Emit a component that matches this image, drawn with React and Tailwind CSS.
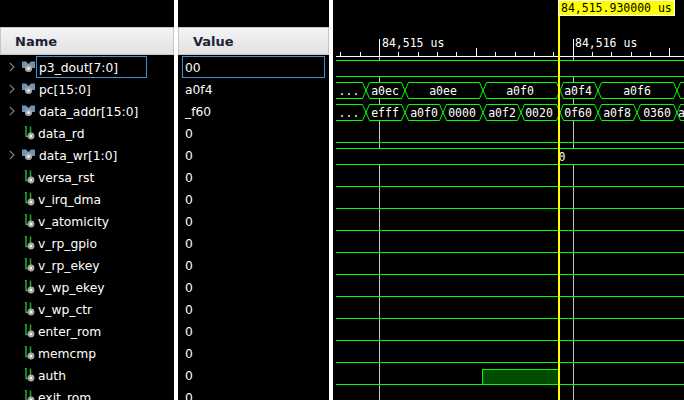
import React from "react";

const rows = [
  ["p3_dout[7:0]", "00", true],
  ["pc[15:0]", "a0f4", true],
  ["data_addr[15:0]", "_f60", true],
  ["data_rd", "0", false],
  ["data_wr[1:0]", "0", true],
  ["versa_rst", "0", false],
  ["v_irq_dma", "0", false],
  ["v_atomicity", "0", false],
  ["v_rp_gpio", "0", false],
  ["v_rp_ekey", "0", false],
  ["v_wp_ekey", "0", false],
  ["v_wp_ctr", "0", false],
  ["enter_rom", "0", false],
  ["memcmp", "0", false],
  ["auth", "0", false],
  ["exit_rom", "0", false],
];

const SANS = "font-['DejaVu_Sans',sans-serif]";

function Chevron() {
  return (
    <svg width="6" height="10" viewBox="0 0 6 10" className="shrink-0">
      <path d="M0.8 0.8 L5 5 L0.8 9.2" fill="none" stroke="#8a8a8a" strokeWidth="1.1" />
    </svg>
  );
}

function BusIcon() {
  return (
    <svg width="13" height="12" viewBox="0 0 13 12" className="shrink-0">
      <path d="M0 0.5 L4 0.5 L6.5 3 L9 0.5 L13 0.5 L13 7 L9.5 7 L6.5 4 L3.5 7 L0 7 Z" fill="#6f93b0" />
      <circle cx="6.5" cy="7.5" r="3.6" fill="#a8a8a8" />
      <circle cx="6.5" cy="7.5" r="1.3" fill="#ffffff" />
    </svg>
  );
}

function BitIcon() {
  return (
    <svg width="11" height="14" viewBox="0 0 11 14" className="shrink-0">
      <path d="M0.8 0.5 L2 0.5 L2 10.5 L4 10.5 M6.5 0.5 L6.5 7" fill="none" stroke="#22b02e" strokeWidth="1.5" />
      <circle cx="7" cy="10" r="3.4" fill="#a8a8a8" />
      <circle cx="7" cy="10" r="1.2" fill="#ffffff" />
    </svg>
  );
}

function Header({ label, className }) {
  return (
    <div
      className={`h-[28px] shrink-0 flex items-center pt-px bg-gradient-to-b from-[#f4f4f4] to-[#e2e2e2] border border-[#c6c6c6] text-[13px] font-bold text-[#1c2233] ${SANS} ${className}`}
    >
      {label}
    </div>
  );
}

function NameRow({ name, bus, selected }) {
  return (
    <div className="h-[22px] shrink-0 flex items-center relative">
      <div className="w-[22px] shrink-0 flex justify-start pl-[9px]">{bus && <Chevron />}</div>
      <div className={bus ? "w-[17px] shrink-0 flex" : "w-[16px] shrink-0 flex pl-[2px]"}>
        {bus ? <BusIcon /> : <BitIcon />}
      </div>
      <span className="text-[12.3px] pt-[2px] text-white whitespace-nowrap">{name}</span>
      {selected && (
        <div className="absolute left-[36px] top-0 w-[111px] h-[22px] border border-[#3d8fd0]" />
      )}
    </div>
  );
}

function ValueRow({ value, selected }) {
  return (
    <div className="h-[22px] shrink-0 flex items-center pl-[7px] relative">
      <span className="text-[12.3px] pt-[2px] text-white">{value}</span>
      {selected && (
        <div className="absolute left-[4px] top-0 w-[143px] h-[22px] border border-[#3d8fd0]" />
      )}
    </div>
  );
}

const GREEN = "#00ff00";
const MONO = "'DejaVu Sans Mono', monospace";

function Bus({ top, xs = [], labels = [] }) {
  const bot = top + 16;
  const mid = top + 8;
  const end = 684;
  const hw = 3.5;
  const pts = [336, ...xs, end];
  const d = [];
  pts.forEach((x, i) => {
    if (i === pts.length - 1) return;
    const a = i === 0 ? x : x + hw;
    const b = i === pts.length - 2 ? pts[i + 1] : pts[i + 1] - hw;
    d.push(`M${a} ${top + 0.5} L${b} ${top + 0.5} M${a} ${bot + 0.5} L${b} ${bot + 0.5}`);
  });
  xs.forEach((x) => {
    d.push(`M${x - hw} ${top + 0.5} L${x + hw} ${bot + 0.5} M${x - hw} ${bot + 0.5} L${x + hw} ${top + 0.5}`);
  });
  return (
    <g>
      <rect x="336" y={top} width="348" height="16" fill="#000" />
      <path d={d.join(" ")} fill="none" stroke={GREEN} strokeWidth="1" shapeRendering="auto" />
      {labels.map(([t, x, anchor], i) => (
        <text key={i} x={x} y={mid + 4.5} textAnchor={anchor || "middle"} fill="#fff" fontSize="11.5" fontFamily={MONO}>
          {t}
        </text>
      ))}
    </g>
  );
}

function Waveform() {
  const ticks = [];
  for (let i = -2; i < 18; i++) ticks.push(379.5 + i * 19.36);
  const bits = [142, 186, 208, 230, 252, 274, 296, 318, 340, 362, 384];
  return (
    <svg width="351" height="400" viewBox="333 0 351 400" className="block shrink-0" shapeRendering="crispEdges">
      <path d="M379.5 56 V400 M573.5 56 V400" stroke="#c4c4c4" strokeWidth="1" />
      <path d="M336 56.5 H684" stroke="#fff" strokeWidth="1" />
      {ticks.map((x, i) => {
        const idx = i - 2;
        const m = ((idx % 5) + 5) % 5;
        const tall = idx === 0 || idx === 10;
        const h = tall ? 17 : m === 0 ? 8 : 4;
        return <rect key={i} x={Math.floor(x)} y={56 - h} width="1" height={h} fill="#fff" />;
      })}
      <text x="382" y="47" fill="#fff" fontSize="11.5" fontFamily={MONO}>84,515 us</text>
      <text x="575" y="47" fill="#fff" fontSize="11.5" fontFamily={MONO}>84,516 us</text>

      {bits.map((y) => (
        <path key={y} d={`M336 ${y + 0.5} H684`} stroke={GREEN} strokeWidth="1" />
      ))}
      <Bus top={60} />
      <Bus
        top={82}
        xs={[366, 405, 483, 560, 598, 677]}
        labels={[["...", 349], ["a0ec", 385], ["a0ee", 443], ["a0f0", 520], ["a0f4", 578], ["a0f6", 637]]}
      />
      <Bus
        top={104}
        xs={[366, 405, 443, 483, 521, 560, 598, 637, 677]}
        labels={[["...", 349], ["efff", 385], ["a0f0", 424], ["0000", 462], ["a0f2", 502], ["0020", 539], ["0f60", 578], ["a0f8", 617], ["0360", 657], ["a", 678, "start"]]}
      />
      <Bus top={148} labels={[["0", 562]]} />

      <rect x="483" y="369" width="75" height="15" fill="#004d00" />
      <path d="M336 384.5 H482.5 V369.5 H558" fill="none" stroke={GREEN} strokeWidth="1" />

      <rect x="558" y="15" width="2" height="385" fill="#ffff00" />
      <rect x="558" y="0" width="117" height="16" fill="#fff" />
      <rect x="559" y="1" width="115" height="14" fill="#ffff00" />
      <text x="561" y="12" fill="#000" fontSize="11.5" fontFamily={MONO}>84,515.930000 us</text>
    </svg>
  );
}

export default function App() {
  return (
    <div className={`w-[684px] h-[400px] overflow-hidden bg-white flex ${SANS}`}>
      <div className="w-[174px] shrink-0 bg-black flex flex-col overflow-hidden pt-[27px]">
        <Header label="Name" className="pl-[14px] mb-px" />
        {rows.map(([n, , b], i) => (
          <NameRow key={n} name={n} bus={b} selected={i === 0} />
        ))}
      </div>
      <div className="w-[4px] shrink-0" />
      <div className="w-[151px] shrink-0 bg-black flex flex-col overflow-hidden pt-[27px]">
        <Header label="Value" className="pl-[14px] mb-px" />
        {rows.map(([n, v], i) => (
          <ValueRow key={n} value={v} selected={i === 0} />
        ))}
      </div>
      <div className="w-[4px] shrink-0" />
      <div className="flex-1 bg-black overflow-hidden">
        <Waveform />
      </div>
    </div>
  );
}
